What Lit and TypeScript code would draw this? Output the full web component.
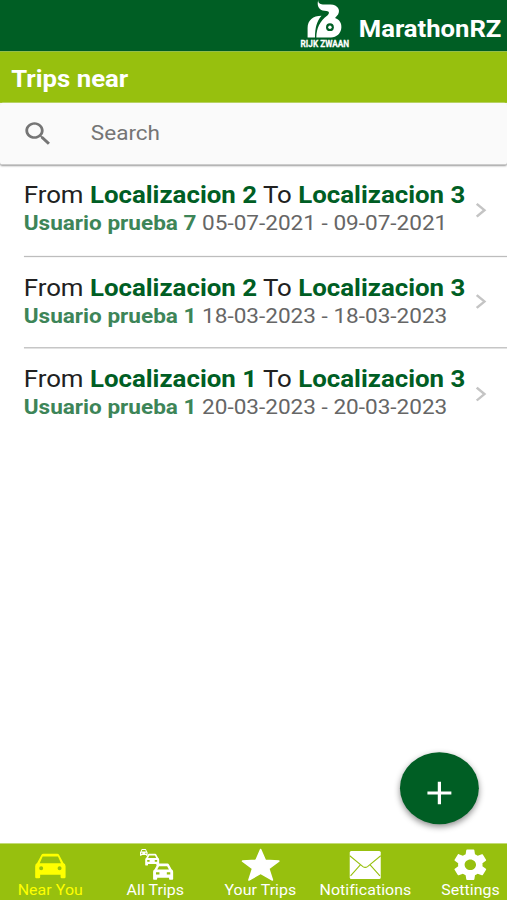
import { LitElement, html, css, svg } from "lit";
import { customElement } from "lit/decorators.js";

const CAR =
  "M6.2 1.2Q6.8 0 8.2 0H22Q23.4 0 24 1.2L28.3 9.2Q30.4 10.2 30.4 12.5V23.2Q30.4 24.4 29.2 24.4H26.6Q25.4 24.4 25.4 23.2V21H5V23.2Q5 24.4 3.8 24.4H1.2Q0 24.4 0 23.2V12.5Q0 10.2 1.9 9.2ZM7.5 2.8L4.5 9.4H25.8L22.8 2.8ZM6 12.4A2 2 0 1 0 6 16.4A2 2 0 1 0 6 12.4ZM24.4 12.4A2 2 0 1 0 24.4 16.4A2 2 0 1 0 24.4 12.4Z";
const FLEET_CAR =
  "M6.4 1Q7 0 8.2 0H22Q23.2 0 23.8 1L28 8.6Q30.4 10 30.4 12.4V23.2Q30.4 24.4 29.2 24.4H25.4Q24.2 24.4 24.2 23.2V21.4H6.2V23.2Q6.2 24.4 5 24.4H1.2Q0 24.4 0 23.2V12.4Q0 10 2.4 8.6ZM9 4L6.3 9H24L21.3 4ZM4.4 13V16.6H9.6V13ZM20.8 13V16.6H26V13Z";
const GEAR =
  "M19.43 12.98c.04-.32.07-.64.07-.98s-.03-.66-.07-.98l2.11-1.65c.19-.15.24-.42.12-.64l-2-3.46c-.12-.22-.39-.3-.61-.22l-2.49 1c-.52-.4-1.08-.73-1.69-.98l-.38-2.65C14.46 2.18 14.25 2 14 2h-4c-.25 0-.46.18-.49.42l-.38 2.65c-.61.25-1.17.59-1.69.98l-2.49-1c-.23-.09-.49 0-.61.22l-2 3.46c-.13.22-.07.49.12.64l2.11 1.65c-.04.32-.07.65-.07.98s.03.66.07.98l-2.11 1.65c-.19.15-.24.42-.12.64l2 3.46c.12.22.39.3.61.22l2.49-1c.52.4 1.08.73 1.69.98l.38 2.65c.03.24.24.42.49.42h4c.25 0 .46-.18.49-.42l.38-2.65c.61-.25 1.17-.59 1.69-.98l2.49 1c.23.09.49 0 .61-.22l2-3.46c.12-.22.07-.49-.12-.64l-2.11-1.65zM12 15.5c-1.93 0-3.5-1.57-3.5-3.5s1.57-3.5 3.5-3.5 3.5 1.57 3.5 3.5-1.57 3.5-3.5 3.5z";

const TABS = [
  { label: "Near You", active: true, icon: svg`<path fill-rule="evenodd" transform="translate(5.6 7.8)" d=${CAR}/>` },
  {
    label: "All Trips",
    icon: svg`<path fill-rule="evenodd" transform="translate(6.2 3) scale(.25 .28)" d=${FLEET_CAR}/>
      <path fill-rule="evenodd" transform="translate(11.4 7.7) scale(.46 .48)" d=${FLEET_CAR}/>
      <path fill-rule="evenodd" transform="translate(19.3 17.6) scale(.66 .66)" d=${FLEET_CAR}/>`,
  },
  {
    label: "Your Trips",
    icon: svg`<path stroke="currentColor" stroke-width="1.6" stroke-linejoin="round" d="M21.2 3.5L25.9 14.3L39.4 15.1L29.3 22.5L33 34L21.2 27.4L9.5 34L13.2 22.5L3.1 15.1L16.6 14.3Z"/>`,
  },
  {
    label: "Notifications",
    icon: svg`<rect x="6.1" y="4.9" width="31" height="28" rx="1.5"/>
      <path fill="none" stroke="#97c00e" stroke-width="1.1" d="M6.1 9.8L19.3 20.6Q21.6 22.2 23.9 20.6L37.1 9.8M6.9 29.8L16.7 18.8M36.3 29.8L26.5 18.8"/>`,
  },
  { label: "Settings", icon: svg`<path transform="translate(1.5 .5) scale(1.63 1.52)" d=${GEAR}/>` },
];

const TRIPS = [
  { from: "Localizacion 2", to: "Localizacion 3", user: "Usuario prueba 7", dates: "05-07-2021 - 09-07-2021" },
  { from: "Localizacion 2", to: "Localizacion 3", user: "Usuario prueba 1", dates: "18-03-2023 - 18-03-2023" },
  { from: "Localizacion 1", to: "Localizacion 3", user: "Usuario prueba 1", dates: "20-03-2023 - 20-03-2023" },
];

@customElement("app-root")
export class AppRoot extends LitElement {
  static styles = css`
    :host { display: block; width: 507px; height: 900px; overflow: hidden; background: #fff; }
    * { box-sizing: border-box; }
    .screen {
      width: 360px; height: 700px; display: flex; flex-direction: column; position: relative;
      transform: scale(1.408333, 1.285714); transform-origin: 0 0; overflow: hidden;
      font-family: Roboto, "Liberation Sans", sans-serif; background: #fff;
    }
    svg { display: block; flex: none; }
    .brand { height: 40px; flex: none; background: #005e24; color: #fff; display: flex; justify-content: flex-end; align-items: flex-start; padding-right: 4px; }
    .logo { width: 37px; height: 40px; margin-right: 5px; overflow: visible; }
    .logo text { font-weight: 700; font-size: 9.2px; stroke: #fff; stroke-width: .25px; }
    .name { font-size: 18.2px; font-weight: 700; line-height: 24px; padding-top: 10.8px; white-space: nowrap; }
    .heading { height: 40px; flex: none; background: #97c00e; color: #fff; padding: 10.4px 8px 0; font-size: 18.3px; line-height: 24px; font-weight: 700; }
    .search { height: 48px; flex: none; background: #fafafa; display: flex; align-items: center; padding: 0 0 .8px 15.2px; color: #757575; font-size: 16px; border-radius: 2px; box-shadow: 0 1px 1.5px rgba(0,0,0,.4); }
    .search svg { width: 24px; height: 24px; margin-right: 25.3px; }
    .list { flex: 1; }
    .trip { height: 71.25px; margin-left: 17px; display: flex; align-items: center; border-bottom: 1px solid #bdbdbd; }
    .trip:first-child { height: 71.75px; padding-bottom: .5px; }
    .trip:last-child { border-color: transparent; }
    .info { flex: 1; white-space: nowrap; margin-left: -.2px; }
    .route { font-size: 18.35px; line-height: 23px; color: #212121; }
    .route b { color: #005e24; font-weight: 700; }
    .meta { font-size: 16.03px; line-height: 22.5px; color: #666; }
    .meta b { color: #3d8558; font-weight: 700; }
    .chev { width: 9px; height: 13px; margin-right: 13.8px; }
    .fab { position: absolute; right: 20px; bottom: 59.2px; width: 56px; height: 56px; border-radius: 50%; border: 0; padding: 0; background: #005e24; box-shadow: 0 2px 5px rgba(0,0,0,.45); }
    .tabs { height: 43.6px; flex: none; background: #97c00e; display: flex; color: #fff; }
    .tab { width: 74.6px; flex: none; display: flex; flex-direction: column; align-items: center; padding-top: 1.6px; }
    .tab:first-child { margin-left: -1.6px; }
    .tab svg { width: 30px; height: 28px; }
    .tab span { font-size: 11.3px; line-height: 12px; margin-top: .6px; letter-spacing: .04px; white-space: nowrap; }
    .active { color: #ff0; }
  `;

  render() {
    return html`<div class="screen">
      <header class="brand">
        <svg class="logo" viewBox="0 0 52 51.4" preserveAspectRatio="none" fill="#fff">
          <path d="M18.2 0C18 3.5 20.5 4.6 24 4.6H30.5C38 5 40.5 10 38 14.6L35 18C39.5 19.5 41.6 23 41.3 27.5C41 33.5 36.5 37.4 31 37.4H16.3C16.5 28 20 21 27 15.8C29.8 13.4 29.5 11.4 26.4 11C21 11 16 8 18.2 0Z"/>
          <path d="M7.6 37.4V28C7.6 20 13 16 21.5 15.8C16.8 21 15 28 15 37.4Z"/>
          <circle cx="29.9" cy="27.2" r="3.9" fill="#005e24"/><circle cx="29.9" cy="27.2" r="1.7"/>
          <text x="0.6" y="46.8" textLength="48.5" lengthAdjust="spacingAndGlyphs">RIJK ZWAAN</text>
        </svg>
        <div class="name">MarathonRZ</div>
      </header>
      <div class="heading">Trips near</div>
      <div class="search">
        <svg viewBox="0 0 24 24" fill="currentColor"><path d="M15.5 14h-.79l-.28-.27C15.41 12.59 16 11.11 16 9.5 16 5.91 13.09 3 9.5 3S3 5.91 3 9.5 5.91 16 9.5 16c1.61 0 3.09-.59 4.23-1.57l.27.28v.79l5 4.99L20.49 19l-4.99-5zm-6 0C7.01 14 5 11.99 5 9.5S7.01 5 9.5 5 14 7.01 14 9.5 11.99 14 9.5 14z"/></svg>
        <span>Search</span>
      </div>
      <main class="list">
        ${TRIPS.map(
          (t) => html`<div class="trip">
            <div class="info">
              <div class="route">From <b>${t.from}</b> To <b>${t.to}</b></div>
              <div class="meta"><b>${t.user}</b> ${t.dates}</div>
            </div>
            <svg class="chev" viewBox="0 0 9 13" fill="none" stroke="#c4c4c4" stroke-width="1.8"><path d="M1.5 1.5L7 6.5L1.5 11.5"/></svg>
          </div>`
        )}
      </main>
      <button class="fab" aria-label="Add trip">
        <svg viewBox="0 0 56 56" stroke="#fff" stroke-width="2.3"><path d="M28 23V40.5M19.5 31.8H36.5"/></svg>
      </button>
      <nav class="tabs">
        ${TABS.map(
          (t) => html`<div class="tab ${t.active ? "active" : ""}">
            <svg viewBox="0 0 42.25 36" preserveAspectRatio="none" fill="currentColor">${t.icon}</svg>
            <span>${t.label}</span>
          </div>`
        )}
      </nav>
    </div>`;
  }
}
